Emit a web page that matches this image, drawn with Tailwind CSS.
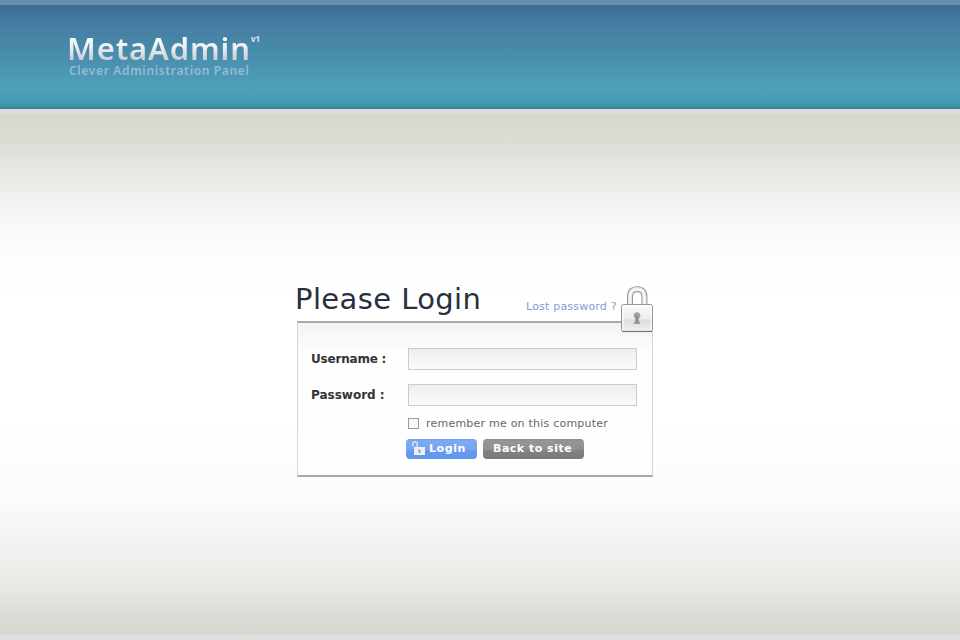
<!DOCTYPE html>
<html lang="en">
<head>
<meta charset="utf-8">
<title>MetaAdmin</title>
<script src="https://cdn.jsdelivr.net/npm/@tailwindcss/browser@4"></script>
</head>
<body class="flex h-[640px] w-[960px] flex-col overflow-hidden bg-white font-['DejaVu_Sans',Verdana,sans-serif]">
<header class="h-[109px] shrink-0 border-t-[5px] border-[#6690b0] bg-[linear-gradient(#3e6c98_0px,#467ba2_18px,#4787a7_38px,#4c95b3_65px,#4f9fb8_82px,#459bb4_98px,#3f8ea6_101px,#397b92_104px)] pl-[67px]">
  <div class="flex h-[58px] items-end">
    <div class="h-[32px] w-[184px] whitespace-nowrap bg-[linear-gradient(#ffffff_5px,#f1f1f3_15px,#cccdd5_29px)] bg-clip-text font-['Noto_Sans'] text-[31px] leading-[34px] font-semibold tracking-[0.85px] text-transparent">MetaAdmin</div>
    <div class="mb-[18px] h-[12px] font-['Noto_Sans'] text-[8px] leading-[12px] font-bold text-[#e2ebf2]">v1</div>
  </div>
  <div class="h-[16px] whitespace-nowrap pl-[2px] font-['Noto_Sans'] text-[12px] leading-[16px] font-semibold tracking-[0.65px] text-[#8fbfd1]">Clever Administration Panel</div>
</header>
<main class="flex grow flex-col border-y-[5px] border-t-[#dcdcde] border-b-[#dededf] bg-[linear-gradient(#d6d7cd_0px,#d9dad2_20px,#e4e4e0_50px,#eeeeec_78px,#f8f8f8_110px,#fefefe_155px,#ffffff_190px,#ffffff_310px,#fbfbfb_385px,#efefed_445px,#e6e6e2_476px,#dcdcd6_502px,#d6d7cf_521px)] pl-[297px]">
  <section class="mt-[165px] w-[356px]">
    <div class="flex h-[42px]">
      <h1 class="-ml-[2px] w-[231px] shrink-0 whitespace-nowrap text-[29px] leading-[40px] tracking-[0.4px] text-[#28303e]">Please Login</h1>
      <a class="mt-[20px] w-[95px] shrink-0 whitespace-nowrap text-[11px] leading-[16px] tracking-[0.2px] text-[#7b9fd3]">Lost password ?</a>
      <svg class="relative -ml-px mt-[7px] h-[48px] w-[34px] shrink-0" viewBox="0 0 34 48">
        <defs>
          <linearGradient id="body" x2="0" y2="1"><stop stop-color="#fafafa"/><stop offset=".55" stop-color="#ededed"/><stop offset=".56" stop-color="#dcdcdc"/><stop offset="1" stop-color="#f2f2f2"/></linearGradient>
        </defs>
        <g transform="translate(1 0)">
        <path d="M9 20V10.500Q9 3.200 16.200 3.200T23.400 10.500V20" fill="none" stroke="#8f8f8f" stroke-width="6"/>
        <path d="M9 20V10.500Q9 3.200 16.200 3.200T23.400 10.500V20" fill="none" stroke="#e4e4e4" stroke-width="4.300"/>
        <path d="M9 20V10.500Q9 3.200 16.200 3.200T23.400 10.500V20" fill="none" stroke="#fafafa" stroke-width="1.800"/>
        <rect x="0.500" y="18.500" width="31" height="27" rx="2" fill="url(#body)" stroke="#959595"/>
        <path d="M2 44V20H30V44" fill="none" stroke="#fff"/>
        <path d="M1.500 45.500H31" stroke="#777" stroke-width="1.200"/>
        <path d="M14.300 32.500A3.400 3.400 0 1 1 17.700 32.500L18 34.500 19.500 38H12.500L14 34.500Z" fill="#a2a2a2"/>
        <path d="M16 29.500V37" stroke="#777"/>
        </g>
      </svg>
    </div>
    <div class="h-[156px] border-x border-y-2 border-x-[#d6d6d6] border-y-[#a9a9a9] bg-[linear-gradient(#f2f2f2_0px,#f8f8f8_13px,#fefefe_30px)] pt-[25px] pl-[13px]">
      <div class="flex h-[22px] items-center">
        <label class="w-[97px] whitespace-nowrap text-[12px] leading-[20px] font-bold tracking-[-0.2px] text-[#333]">Username :</label>
        <div class="h-[22px] w-[229px] border border-[#cbcbcb] bg-linear-to-b from-[#ededed] to-[#fbfbfb]"></div>
      </div>
      <div class="mt-[14px] flex h-[22px] items-center">
        <label class="w-[97px] whitespace-nowrap text-[12px] leading-[20px] font-bold text-[#333]">Password :</label>
        <div class="h-[22px] w-[229px] border border-[#cbcbcb] bg-linear-to-b from-[#ededed] to-[#fbfbfb]"></div>
      </div>
      <div class="mt-[10px] ml-[97px] flex h-[15px] items-center">
        <div class="size-[11px] border border-[#999] bg-[#f8f8f8]"></div>
        <span class="ml-[7px] whitespace-nowrap text-[11px] leading-[15px] tracking-[0.22px] text-[#666]">remember me on this computer</span>
      </div>
      <div class="mt-[8px] ml-[95px] flex h-[20px] gap-[6px]">
        <div class="flex w-[71px] items-center rounded-[4px] bg-[linear-gradient(#729fef_0px,#7eaaf3_2px,#78a5f2_10px,#6599ed_12px,#5e97ee_20px)] text-[11px] leading-[20px] font-bold text-white">
          <svg class="ml-[5px] h-[16px] w-[16px] shrink-0" viewBox="0 0 16 16">
            <path d="M1.700 5.500V2.500Q1.700 1 3.200 1H4.700Q6.200 1 6.200 2.500V7" fill="none" stroke="#e6e9f1" stroke-width="1.300"/>
            <rect x="3" y="6" width="11" height="8" fill="#edeef2"/>
            <path d="M7.500 8.500H9.500V12H7.500Z" fill="#929dba"/>
          </svg>
          <span class="ml-[2px] tracking-[0.6px]">Login</span>
        </div>
        <div class="w-[101px] rounded-[4px] bg-[linear-gradient(#878787_0px,#969696_2px,#909090_10px,#818181_12px,#797979_20px)] pl-[10px] whitespace-nowrap text-[11px] leading-[20px] font-bold tracking-[0.5px] text-white">Back to site</div>
      </div>
    </div>
  </section>
</main>
</body>
</html>
